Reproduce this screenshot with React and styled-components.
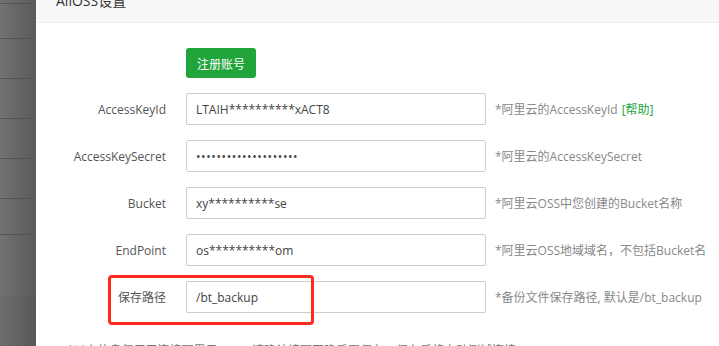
import React from "react";
import styled, { createGlobalStyle } from "styled-components";

const GlobalStyle = createGlobalStyle`
  html, body {
    margin: 0;
    padding: 0;
    height: 100%;
    overflow: hidden;
    background: #fff;
    font-family: "Open Sans", "Noto Sans CJK SC", sans-serif;
  }
`;

const Page = styled.div`
  display: flex;
  width: 719px;
  height: 346px;
  overflow: hidden;
`;

// gray page behind the modal (the mask)
const Backdrop = styled.div`
  width: 36px;
  flex-shrink: 0;
  display: flex;
  flex-direction: column;
  background: linear-gradient(to right, #727272, #5b5b5b);
`;

const BackdropRow = styled.div`
  height: ${(p) => p.h}px;
  flex-shrink: 0;
  border-bottom: 1px solid ${(p) => (p.line ? "#545454" : "transparent")};
  background: ${(p) => (p.shade ? "rgba(0,0,0,0.03)" : "transparent")};
`;

const Modal = styled.div`
  flex: 1;
  background: #fff;
  display: flex;
  flex-direction: column;
`;

const Header = styled.div`
  height: 42px;
  margin-top: -20px;
  line-height: 42px;
  padding-left: 20px;
  background: #f8f8f8;
  border-bottom: 1px solid #ebebeb;
  font-size: 14px;
  color: #333;
`;

const Body = styled.div`
  padding-top: 25px;
`;

const Row = styled.div`
  position: relative;
  display: flex;
  align-items: center;
  height: ${(p) => p.h || 32}px;
  margin-bottom: 15px;
`;

const Label = styled.span`
  width: 130px;
  margin-right: 20px;
  text-align: right;
  font-size: 12px;
  color: #555;
  flex-shrink: 0;
`;

const Input = styled.input`
  box-sizing: border-box;
  width: 300px;
  height: 32px;
  padding: 0 9px;
  border: 1px solid #ccc;
  border-radius: 2px;
  font-family: "Open Sans", "Noto Sans CJK SC", sans-serif;
  font-size: 12px;
  color: #444;
  outline: none;
  letter-spacing: ${(p) => (p.type === "password" ? "0.6px" : "0")};
`;

const Hint = styled.span`
  margin-left: 9px;
  font-size: 12px;
  color: #888;
  white-space: nowrap;
`;

const HelpLink = styled.a`
  color: #20a53a;
  text-decoration: none;
  margin-left: 4px;
`;

const GreenBtn = styled.button`
  height: 30px;
  padding: 0 11px;
  border: none;
  border-radius: 3px;
  background: #20a53a;
  color: #fff;
  font-family: "Noto Sans CJK SC", sans-serif;
  font-size: 12px;
`;

// annotation drawn over the screenshot
const Highlight = styled.div`
  position: absolute;
  left: 72px;
  top: -6px;
  width: 206px;
  height: 50px;
  box-sizing: border-box;
  border: 3px solid #ff2b1f;
  border-radius: 4px;
  pointer-events: none;
`;

const Note = styled.div`
  padding-left: 31px;
  margin-top: 28px;
  font-size: 12px;
  line-height: 20px;
  color: #777;
  white-space: nowrap;
`;

const backdropRows = [
  { h: 3, line: true },
  { h: 34, line: true },
  { h: 39, line: true },
  { h: 39, line: true },
  { h: 39, line: true },
  { h: 39, line: true },
  { h: 35, line: true },
  { h: 59 },
  { h: 60, shade: true },
];

const fields = [
  {
    label: "AccessKeyId",
    value: "LTAIH**********xACT8",
    hint: "*阿里云的AccessKeyId",
    help: true,
  },
  {
    label: "AccessKeySecret",
    value: "12345678901234567890",
    type: "password",
    hint: "*阿里云的AccessKeySecret",
  },
  { label: "Bucket", value: "xy**********se", hint: "*阿里云OSS中您创建的Bucket名称" },
  {
    label: "EndPoint",
    value: "os**********om",
    hint: "*阿里云OSS地域域名，不包括Bucket名",
  },
  {
    label: "保存路径",
    value: "/bt_backup",
    hint: "*备份文件保存路径, 默认是/bt_backup",
    marked: true,
  },
];

const App = () => {
  return (
    <Page>
      <GlobalStyle />
      <Backdrop>
        {backdropRows.map((r, i) => (
          <BackdropRow key={i} h={r.h} line={r.line} shade={r.shade} />
        ))}
      </Backdrop>

      <Modal>
        <Header>AllOSS设置</Header>
        <Body>
          <Row h={30}>
            <Label />
            <GreenBtn>注册账号</GreenBtn>
          </Row>

          {fields.map((f) => (
            <Row key={f.label}>
              <Label>{f.label}</Label>
              <Input type={f.type || "text"} defaultValue={f.value} readOnly />
              <Hint>
                {f.hint}
                {f.help && <HelpLink href="#">[帮助]</HelpLink>}
              </Hint>
              {f.marked && <Highlight />}
            </Row>
          ))}

          <Note>
            *以上信息仅用于连接阿里云OSS，请确认填写正确后再保存，保存后将自动测试连接
          </Note>
        </Body>
      </Modal>
    </Page>
  );
};

export default App;
